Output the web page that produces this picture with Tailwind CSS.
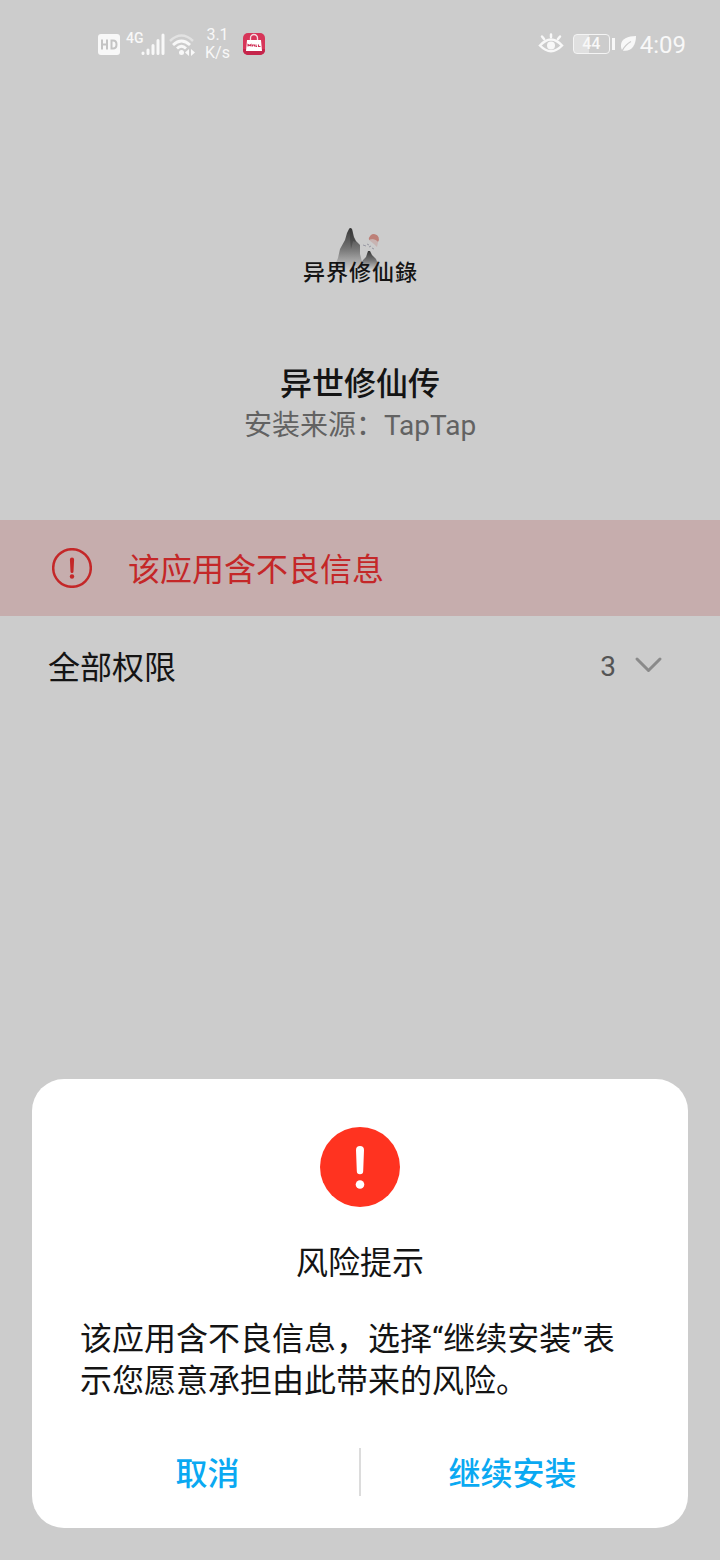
<!DOCTYPE html>
<html lang="zh-CN">
<head>
<meta charset="utf-8">
<meta name="viewport" content="width=device-width, initial-scale=1">
<title>异世修仙传</title>
<script src="https://cdn.jsdelivr.net/npm/@tailwindcss/browser@4"></script>
</head>
<body class="min-h-screen bg-[#cccccc] font-['Roboto','Noto_Sans_CJK_SC',sans-serif] text-[#141414]">
<header class="flex h-22 items-center justify-between pl-24 pr-[34px] text-[#f8f8f8]">
  <div class="flex items-center">
    <svg class="h-7 w-7" viewBox="0 0 28 28" aria-label="HD"><rect x="2" y="4" width="22" height="21" rx="3" fill="#f8f8f8"/><path d="M6 9.500v10M11 9.500v10M6 14.500h5M15.500 10.500v8h1.500q3.500 0 3.500-4t-3.500-4z" fill="none" stroke="#c4c4c4" stroke-width="2"/></svg>
    <span class="ml-0.5 -mr-1 self-start pt-1 text-sm leading-4 font-medium">4G</span>
    <svg class="-ml-0.5 h-7 w-7" viewBox="0 0 28 28" fill="none" stroke="#f8f8f8" stroke-width="3" stroke-linecap="round"><path d="M5 23v.5M10 20v3.500M15 15.500v8M20 10.500v13M25 5v18.500"/></svg>
    <svg class="ml-0.5 h-7 w-8" viewBox="0 0 32 28" fill="none" stroke="#f8f8f8"><path d="M2 11Q13.500 0 25 11" stroke-width="2.500" opacity=".5"/><path d="M5 15Q13.500 7 22 15M9 18.500Q13.500 14 18 18.500" stroke-width="2.800"/><circle cx="13.500" cy="22.500" r="2.500" fill="#f8f8f8" stroke="none"/><path d="M21 19v7l-4-3.500zM23 19v7l4-3.500z" fill="#f8f8f8" stroke="none"/></svg>
    <div class="ml-0.5 w-8 text-center text-base leading-[18px]"><div>3.1</div><div>K/s</div></div>
    <svg class="ml-2 h-6 w-6" viewBox="0 0 24 24"><rect x="1" y="1" width="22" height="22" rx="5" fill="#d73559"/><path d="M1 17h22v1a5 5 0 0 1-5 5H6a5 5 0 0 1-5-5z" fill="#c5254b"/><path d="M8.500 9V6a3.500 3.500 0 0 1 7 0V9" fill="none" stroke="#f5dce2" stroke-width="1.300"/><path d="M5 8h14l1 11H4z" fill="#fff"/><path d="M6 14.500v-2l1.500 1 1.500-1v2M10.500 14.500v-1.500h2v1.500M14 12.500v2h1M16.500 12.500v2h2" fill="none" stroke="#cf3157" stroke-width="1.100"/></svg>
  </div>
  <div class="flex items-center">
    <svg class="h-7 w-7" viewBox="0 0 28 28" fill="none" stroke="#f8f8f8" stroke-width="2.500" stroke-linecap="round"><path d="M3 15.500Q14 3.500 25 15.500Q14 27 3 15.500z"/><path d="M14 7V4.500M7 9L5 6.500M21 9l2-2.500"/><circle cx="14" cy="15.500" r="4" fill="#f8f8f8" stroke="none"/></svg>
    <div class="ml-2 flex h-5 w-[37px] items-center justify-center rounded-sm border border-[#f4f4f4] bg-linear-to-r from-[#e0e0e0] from-44% to-transparent to-44% text-base leading-4 font-medium">44</div>
    <div class="ml-0.5 h-3 w-[3px] bg-[#f8f8f8]"></div>
    <svg class="ml-1 h-5 w-5" viewBox="0 0 20 20"><path d="M17 2C9 2 2 5 2 11c0 2 0 4 1.500 5.500C12 18 17 12 17 2z" fill="#f8f8f8"/><path d="M3 17Q6 11 12 7.500" fill="none" stroke="#ccc" stroke-width="1.200"/></svg>
    <time class="ml-px pt-0.5 text-2xl leading-7">4:09</time>
  </div>
</header>
<main>
  <section class="flex flex-col items-center pt-34 pb-19">
    <div class="flex h-28 w-28 flex-col items-center pt-0.5">
      <svg class="-mb-4 h-12 w-20" viewBox="0 0 80 48"><defs><linearGradient id="ink" x1="0" y1="0" x2="0" y2="1"><stop offset="0" stop-color="#383838"/><stop offset=".5" stop-color="#767676"/><stop offset="1" stop-color="#ccc"/></linearGradient></defs><path d="M13 44L18 32 20 23 25 14 27 7 29 3q1-2 3 0l2 8 2 4 4 4 0 9 2 8 2 8z" fill="url(#ink)"/><path d="M39 42l4-8 3-3 2-6 2 0 2 4 4 4 2 5 6 6z" fill="url(#ink)"/><path d="M30 2l2 1 1 7 3 6-3-1-2 8-1-10z" fill="#303030" opacity=".4"/><path d="M49 14a5 5 0 1 1 9 2q-3-4-9-2z" fill="#bd8078"/><path d="M49 14q6-2 9 2l-1 5-3-3z" fill="#c5a19e" opacity=".6"/><path d="M43 19l3 1M49 21l2-1M47 18l2 1M52 22l2 1" stroke="#778" opacity=".6"/></svg>
      <span class="flex gap-px whitespace-nowrap font-['Noto_Sans_CJK_SC',serif] text-[22px] leading-6 font-medium"><span>异</span><span>界</span><span>修</span><span>仙</span><span>錄</span></span>
    </div>
    <h1 class="mt-6 text-[32px] leading-12 font-medium">异世修仙传</h1>
    <p class="text-[28px] leading-9 text-[#626262]">安装来源：TapTap</p>
  </section>
  <div role="alert" class="flex h-24 items-center gap-9 bg-[#c6adad] px-13 text-[#c42728]">
    <svg class="h-10 w-10" viewBox="0 0 40 40"><circle cx="20" cy="20" r="18.800" fill="none" stroke="currentColor" stroke-width="2.500"/><path d="M17.900 11.500q0-2 2.100-2t2.100 2l-.6 12q0 1.500-1.500 1.500t-1.500-1.500z" fill="currentColor"/><circle cx="20" cy="28.500" r="2.200" fill="currentColor"/></svg>
    <span class="pt-1 text-[32px] leading-12">该应用含不良信息</span>
  </div>
  <button type="button" class="flex h-24 w-full items-center pr-14 pl-12 pt-1">
    <span class="pt-1 text-[32px] leading-12">全部权限</span>
    <span class="ml-auto pt-0.5 text-[28px] leading-9 text-[#555555]">3</span>
    <svg class="ml-4 h-8 w-8" viewBox="0 0 32 32" fill="none" stroke="#8a8a8a" stroke-width="3" stroke-linecap="round" stroke-linejoin="round"><path d="M5 9l11.500 11.500L28 9"/></svg>
  </button>
</main>
<div class="fixed inset-0 flex items-end p-8">
  <section role="alertdialog" aria-labelledby="risk-title" aria-describedby="risk-text" class="w-full rounded-4xl bg-white px-12 pt-12 pb-8">
    <svg class="mx-auto h-20 w-20" viewBox="0 0 80 80"><circle cx="40" cy="40" r="40" fill="#ff3320"/><path d="M36 23q0-4 4-4t4 4l-.8 21q0 3.200-3.200 3.200t-3.200-3.200z" fill="#fff"/><circle cx="40" cy="57.500" r="4.300" fill="#fff"/></svg>
    <h2 id="risk-title" class="mt-8 text-center text-[32px] leading-12">风险提示</h2>
    <p id="risk-text" class="mt-[31px] text-[32px] leading-[42px]">该应用含不良信息，选择“继续安装”表示您愿意承担由此带来的风险。</p>
    <div class="-mx-6 mt-[46px] flex h-12 items-center text-[32px] leading-12 font-medium text-[#0aa9f2]">
      <button type="button" class="flex-1 pt-1">取消</button>
      <div class="h-12 w-0.5 bg-[#dcdcdc]"></div>
      <button type="button" class="flex-1 pt-1">继续安装</button>
    </div>
  </section>
</div>
</body>
</html>
